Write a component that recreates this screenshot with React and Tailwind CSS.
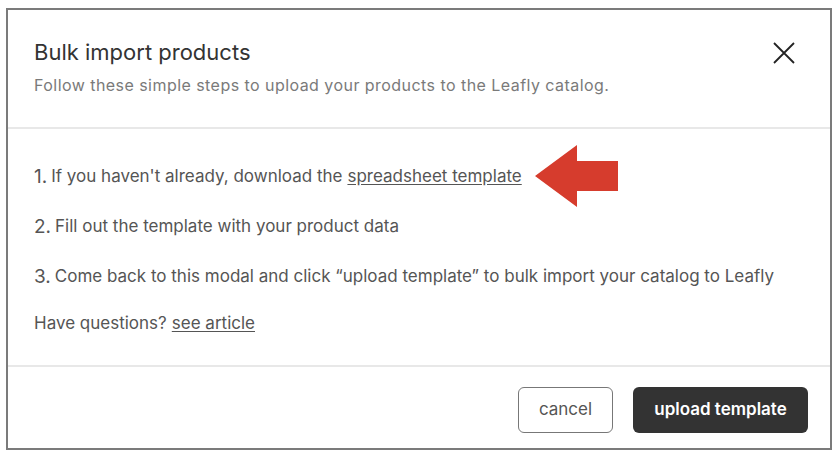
export default function App() {
  const font = { fontFamily: 'Inter, "Noto Sans", sans-serif' };
  return (
    <div className="w-[840px] h-[457px] bg-white pt-2 pl-[6px]" style={font}>
      <div className="w-[826px] h-[442px] border-2 border-[#7b7b7b] flex flex-col">
        <div className="h-[119px] flex justify-between border-b-2 border-[#e8e8e8] pl-[26px] pr-[35px]">
          <div className="pt-[27px]">
            <h2 className="text-[22px] leading-[30px] text-[#333]">Bulk import products</h2>
            <p className="mt-[8px] text-[16px] leading-[20px] text-[#7a7a7a] tracking-[0.45px]">
              Follow these simple steps to upload your products to the Leafly catalog.
            </p>
          </div>
          <button className="mt-[32px] w-[22px] h-[22px] text-[#222]">
            <svg viewBox="0 0 22 22" width="22" height="22" fill="none" stroke="currentColor" strokeWidth="1.8">
              <path d="M1 1 L21 21 M21 1 L1 21" />
            </svg>
          </button>
        </div>
        <div className="h-[238px] border-b-2 border-[#e8e8e8] pl-[26px] pt-[35px] text-[17px] text-[#555]">
          <div className="flex items-center h-[26px]">
            <span className="text-[19px] mr-[4px]">1.</span>
            <span>If you haven't already, download the </span>
            <a className="underline underline-offset-2 ml-[5px]">spreadsheet template</a>
            <svg className="ml-[13px]" width="84" height="64" viewBox="0 0 84 64">
              <polygon points="0,31 42,0 42,16 83,16 83,46 42,46 42,62" fill="#d63c2d" />
            </svg>
          </div>
          <div className="flex items-center h-[26px] mt-[24px]">
            <span className="text-[19px] mr-[4px]">2.</span>
            <span>Fill out the template with your product data</span>
          </div>
          <div className="flex items-center h-[26px] mt-[24px]">
            <span className="text-[19px] mr-[4px]">3.</span>
            <span>Come back to this modal and click “upload template” to bulk import your catalog to Leafly</span>
          </div>
          <div className="flex items-center h-[26px] mt-[21px]">
            <span>Have questions? </span>
            <a className="underline underline-offset-2 ml-[5px]">see article</a>
          </div>
        </div>
        <div className="flex-1 flex justify-end items-start pt-[20px] pr-[22px] gap-[20px]">
          <button className="w-[95px] h-[46px] rounded-[6px] border border-[#777] text-[17px] text-[#555]">cancel</button>
          <button className="w-[175px] h-[46px] rounded-[6px] bg-[#333] text-white font-semibold text-[17px]">upload template</button>
        </div>
      </div>
    </div>
  );
}
